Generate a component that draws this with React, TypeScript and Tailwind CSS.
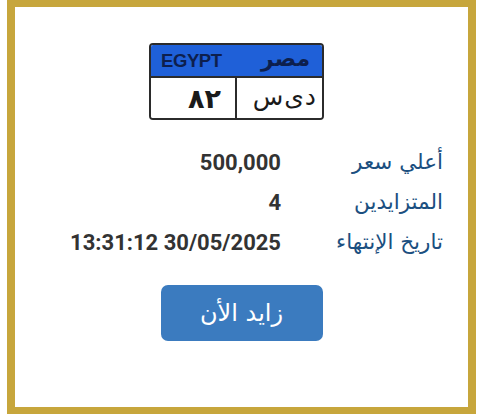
import React from 'react';

const rows = [
  { label: 'أعلي سعر', value: '500,000' },
  { label: 'المتزايدين', value: '4' },
  { label: 'تاريخ الإنتهاء', value: '13:31:12 30/05/2025' },
];

function Plate() {
  return (
    <div className="ml-[134px] w-[175px] h-[77px] border-2 border-[#2b2b2b] rounded-[4px] overflow-hidden flex flex-col">
      {/* header */}
      <div className="h-[33px] bg-[#1f60d8] border-b-2 border-[#2b2b2b] flex items-center justify-between pl-[10px] pr-[12px]">
        <span className="font-['Liberation_Sans',sans-serif] font-bold text-[18.5px] text-[#0d1f4d] tracking-[-0.4px]">EGYPT</span>
        <span dir="rtl" className="font-['DejaVu_Sans',sans-serif] font-bold text-[22px] leading-none text-[#0d1f4d] -mt-[4px]">مصر</span>
      </div>
      {/* numbers / letters */}
      <div className="flex-1 flex bg-white">
        <div className="w-[86px] flex items-center justify-end pr-[14px] border-r-2 border-[#2b2b2b]">
          <span className="font-['DejaVu_Sans',sans-serif] font-bold text-[27px] leading-none text-[#1a1a1a]">٨٢</span>
        </div>
        <div className="flex-1 flex items-center justify-end pr-[6px]">
          <span className="font-['DejaVu_Sans',sans-serif] text-[25px] leading-none text-[#1a1a1a] -mt-[4px] flex gap-[1px]">
            <span>س</span>
            <span>ى</span>
            <span>د</span>
          </span>
        </div>
      </div>
    </div>
  );
}

export default function App() {
  return (
    <div className="w-[478px] h-[414px] bg-white">
      <div className="ml-[7px] w-[469px] h-[414px] border-[8px] border-t-[7px] border-b-[7px] border-[#c7a63c] pt-[36px]">
        <Plate />

        <div dir="rtl" className="mt-[22px] pr-[25px]">
          {rows.map((r) => (
            <div key={r.label} className="h-[40px] flex items-center">
              <div className="w-[162px] font-['DejaVu_Sans',sans-serif] text-[21.5px] text-[#1b4f80]">{r.label}</div>
              <div dir="ltr" className="font-['Roboto',sans-serif] font-bold text-[22px] text-[#333333]">{r.value}</div>
            </div>
          ))}
        </div>

        <div className="mt-[23px] flex justify-center">
          <button className="w-[162px] h-[56px] rounded-[7px] bg-[#3b7bbf] text-white font-['DejaVu_Sans',sans-serif] text-[24px] leading-none">
            زايد الأن
          </button>
        </div>
      </div>
    </div>
  );
}
